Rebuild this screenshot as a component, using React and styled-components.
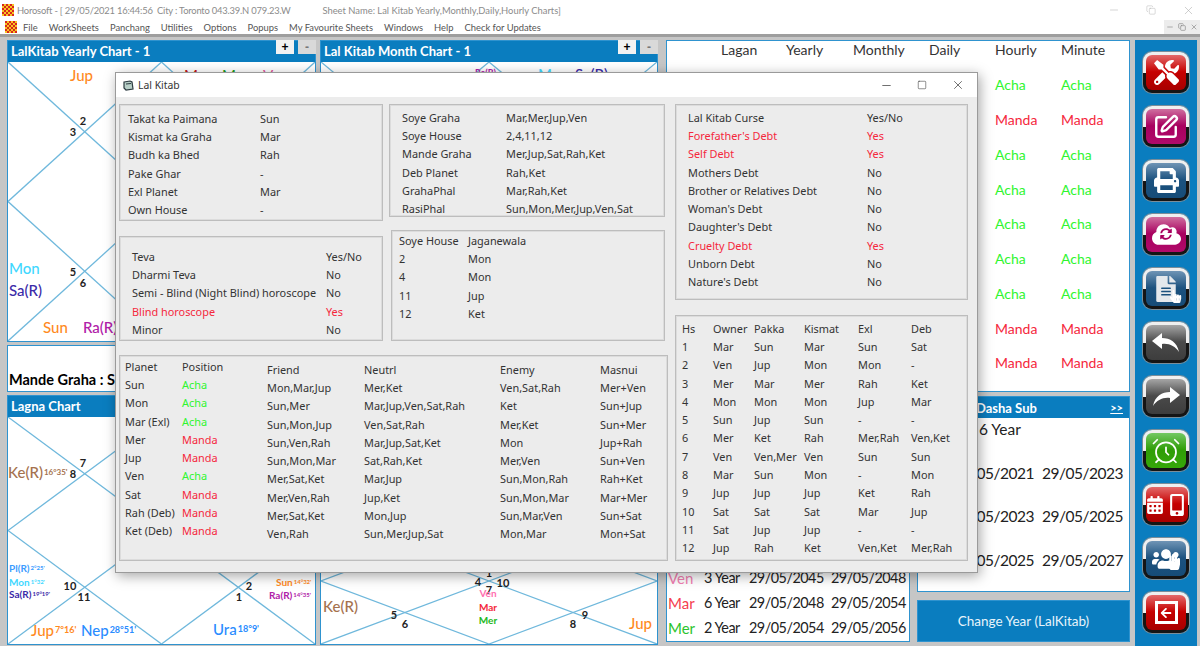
import React from 'react';
import styled, { createGlobalStyle } from 'styled-components';
import { SquarePen, AlarmClock, Minus, Square, X, Copy } from 'lucide-react';
import { FaTools, FaPrint, FaCloud, FaSyncAlt, FaFileAlt, FaHandPointer, FaCalendarAlt, FaUsers, FaHandPaper, FaArrowLeft, FaMobileAlt } from 'react-icons/fa';

const Global = createGlobalStyle`
  html, body { margin: 0; padding: 0; background: #c6c6c6; }
  * { box-sizing: border-box; }
`;

const CHART_FONT = `Lato, "Liberation Sans", sans-serif`;
const UI_FONT = `"Noto Sans", "Open Sans", sans-serif`;
const BLUE = '#0a7dbf';

const Page = styled.div`
  position: relative;
  width: 1200px;
  height: 646px;
  overflow: hidden;
  display: flex;
  flex-direction: column;
  background: #c6c6c6;
  font-family: ${CHART_FONT};
`;

const TitleBar = styled.div`
  height: 20px;
  flex: none;
  background: #fff;
  display: flex;
  align-items: center;
  padding-left: 2px;
  color: #8b8b8b;
  font-family: ${CHART_FONT};
  font-size: 9.4px;
  white-space: pre;
`;

const TitleText = styled.span`
  margin-left: 3px;
  letter-spacing: -0.2px;
`;

const SheetName = styled.span`
  margin-left: 32px;
`;

const WinControls = styled.div`
  margin-left: auto;
  width: 92px;
  display: flex;
  justify-content: space-between;
  align-items: center;
  padding-right: 5px;
  color: #a8a8a8;
`;

const MenuBar = styled.div`
  height: 14px;
  flex: none;
  background: #fff;
  display: flex;
  align-items: center;
  padding-left: 5px;
  color: #555;
  font-family: ${CHART_FONT};
  font-size: 9.4px;
`;

const MenuItem = styled.span`
  margin-left: ${p => p.$gap || 11}px;
`;

const MdiControls = styled.div`
  margin-left: auto;
  width: 36px;
  height: 14px;
  display: flex;
  align-items: center;
  justify-content: space-around;
  background: #ececec;
  color: #888;
`;

const Rule = styled.div`
  height: 3px;
  flex: none;
  background: #9e9e9e;
`;

const Workspace = styled.div`
  flex: 1;
  min-height: 0;
  display: flex;
  padding: 3px 3px 0 7px;
`;

const ChartsArea = styled.div`
  width: 651px;
  flex: none;
  display: grid;
  grid-template-columns: 309px 338px;
  grid-template-rows: 302px 47px 250px;
  column-gap: 4px;
  row-gap: 3px;
`;

const Panel = styled.section`
  position: relative;
  display: flex;
  flex-direction: column;
  background: #fff;
  border: 1px solid #2f93cf;
  min-height: 0;
  grid-column: ${p => p.$span || 'auto'};
`;

const PanelHead = styled.header`
  height: 21px;
  flex: none;
  display: flex;
  align-items: center;
  padding: 0 0 2px 3px;
  background: ${BLUE};
  color: #fff;
  font-size: 13px;
  font-weight: 700;
`;

const HeadButtons = styled.div`
  position: absolute;
  top: -1px;
  right: -1px;
  display: flex;
  gap: 4px;
`;

const HeadButton = styled.button`
  width: 18px;
  height: 14px;
  padding: 0;
  border: none;
  background: ${p => (p.$dim ? '#d9d9d9' : '#f2f2f2')};
  color: ${p => (p.$dim ? '#777' : '#000')};
  font: 700 12px/13px "Liberation Sans", sans-serif;
`;

const ChartBox = styled.div`
  position: relative;
  flex: ${p => (p.$height ? 'none' : '1')};
  height: ${p => (p.$height ? `${p.$height}px` : 'auto')};
  margin-top: ${p => (p.$height ? 'auto' : '0')};
  overflow: hidden;
`;

const ChartLines = styled.svg`
  position: absolute;
  inset: 0;
  width: 100%;
  height: 100%;
`;

const ChartLabel = styled.span`
  position: absolute;
  left: ${p => p.$x}px;
  top: ${p => p.$y}px;
  transform: translate(${p => (p.$mid ? '-50%' : '0')}, -50%);
  color: ${p => p.$color || '#222'};
  font-size: ${p => p.$size || 11}px;
  font-weight: ${p => p.$weight || 500};
  white-space: nowrap;
  line-height: 1;
`;

const Deg = styled.span`
  font-size: ${p => p.$size || 9}px;
  vertical-align: 35%;
  margin-left: 1px;
  font-weight: 700;
`;

const MandeText = styled.div`
  margin-top: auto;
  padding: 0 0 3px 1px;
  color: #000;
  font-size: 14.5px;
  font-weight: 700;
`;

const RightArea = styled.div`
  width: 464px;
  margin-left: 8px;
  flex: none;
  display: grid;
  grid-template-columns: 244px 213px;
  grid-template-rows: 352px 196px 46px;
  column-gap: 7px;
  row-gap: 4px;
`;

const TablePanel = styled(Panel)`
  grid-column: 1 / 3;
  width: 464px;
`;

const TableRow = styled.div`
  display: grid;
  grid-template-columns: 65px 67px 76px 66px 66px 1fr;
  padding-left: 54px;
  align-items: center;
  height: ${p => (p.$head ? '17px' : '34.75px')};
  margin-bottom: ${p => (p.$head ? '9.6px' : '0')};
  color: #333;
  font-size: 14px;
`;

const Status = styled.span`
  color: ${p => (p.$good ? '#2ff52f' : '#f5273c')};
  grid-column: ${p => p.$col || 'auto'};
`;

const DashaPanel = styled(Panel)`
  grid-row: 2 / 4;
  justify-content: flex-end;
  padding-bottom: 1px;
`;

const DashaRow = styled.div`
  display: grid;
  grid-template-columns: 36px 45px 82px 1fr;
  align-items: center;
  height: 25px;
  padding-left: 1px;
  color: #222;
  font-size: 14.4px;
  letter-spacing: -0.5px;
`;

const DashaName = styled.span`
  color: ${p => p.$color};
  font-size: 15px;
  letter-spacing: 0;
`;

const SubPanel = styled(Panel)`
  font-size: 15.5px;
  color: #222;
`;

const SubHead = styled(PanelHead)`
  justify-content: space-between;
  padding: 0 6px 0 58px;
`;

const MoreLink = styled.span`
  font-size: 11px;
  text-decoration: underline;
`;

const YearLine = styled.div`
  height: 22px;
  margin-bottom: 11px;
  padding-left: 61px;
  line-height: 22px;
`;

const SubDates = styled.div`
  height: 43.5px;
  display: flex;
  justify-content: flex-end;
  align-items: center;
  gap: 8px;
  padding-right: 6px;
  letter-spacing: -0.5px;
`;

const ChangeButton = styled.button`
  margin: 4px 0 0;
  background: ${BLUE};
  border: 1px solid #fff;
  outline: 1px solid #2f93cf;
  outline-offset: -1px;
  color: #e8f4fb;
  font-family: ${CHART_FONT};
  font-size: 13.5px;
  padding: 0;
`;

const Toolbar = styled.aside`
  width: 62px;
  margin-left: 5px;
  flex: none;
  display: flex;
  flex-direction: column;
  align-items: center;
  gap: 13px;
  padding-top: 12px;
  background: ${BLUE};
`;

const TONES = {
  red: ['#e36a6a', '#c60000', '#a80000'],
  magenta: ['#cf6f9f', '#a8005f', '#b00a6a'],
  navy: ['#6f94b5', '#1c527f', '#164c78'],
  grey: ['#a6a6a6', '#4a4a4a', '#3d3d3d'],
  green: ['#74c864', '#2f9d06', '#36a80a'],
};

const ToolButton = styled.button`
  width: 46px;
  height: 41px;
  flex: none;
  display: flex;
  padding: 3px;
  border: none;
  border-radius: 9px;
  background: linear-gradient(#efefef 0 52%, #151515 52% 100%);
  box-shadow: 0 0 0 1px #7a8d99;
`;

const ToolFace = styled.span`
  flex: 1;
  display: flex;
  align-items: center;
  justify-content: center;
  gap: 2px;
  position: relative;
  border-radius: 6px;
  color: #fff;
  background: linear-gradient(${p => TONES[p.$tone][0]} 0%, ${p => TONES[p.$tone][1]} 48%, ${p => TONES[p.$tone][2]} 100%);
`;

const OverIcon = styled.span`
  position: absolute;
  left: ${p => p.$x}px;
  top: ${p => p.$y}px;
  display: flex;
  color: ${p => p.$color || '#fff'};
`;

const Dialog = styled.div`
  position: absolute;
  left: 115px;
  top: 72px;
  width: 863px;
  height: 501px;
  display: flex;
  flex-direction: column;
  background: #ececec;
  border: 1px solid #9a9a9a;
  box-shadow: 2px 3px 12px rgba(0, 0, 0, 0.35);
  font-family: ${UI_FONT};
  font-size: 10.9px;
  color: #333;
`;

const DialogTitle = styled.div`
  height: 24px;
  flex: none;
  display: flex;
  align-items: center;
  gap: 4px;
  padding-left: 7px;
  background: #fff;
  color: #333;
  font-size: 10.4px;
`;

const DialogControls = styled.div`
  margin-left: auto;
  width: 85px;
  margin-right: 12px;
  display: flex;
  justify-content: space-between;
  align-items: center;
  color: #222;
`;

const DialogBody = styled.div`
  flex: 1;
  display: flex;
  gap: 7px;
  padding: 7px 0 0 3px;
`;

const LeftPart = styled.div`
  width: 549px;
  display: flex;
  flex-direction: column;
  gap: 14px;
`;

const TopColumns = styled.div`
  display: flex;
  gap: 6px;
  padding-right: 3px;
`;

const Column = styled.div`
  display: flex;
  flex-direction: column;
  width: ${p => p.$width}px;
  gap: ${p => p.$gap}px;
`;

const Group = styled.div`
  height: ${p => p.$height}px;
  margin-left: ${p => p.$left || 0}px;
  padding: ${p => p.$pad};
  border: 1px solid #bdbdbd;
  box-shadow: inset 0 0 0 1px #dcdcdc;
`;

const Row = styled.div`
  display: grid;
  grid-template-columns: ${p => p.$cols};
  height: 18.3px;
  align-items: center;
  white-space: nowrap;
  color: ${p => (p.$red ? '#f5273c' : 'inherit')};
`;

const PlanetSplit = styled.div`
  display: flex;
`;

const PlanetCol = styled.div`
  width: ${p => p.$width}px;
  padding-top: ${p => p.$top || 0}px;
  flex: none;
`;

function Logo() {
  const cells = [];
  for (let r = 0; r < 6; r++) {
    for (let c = 0; c < 6; c++) {
      cells.push(<rect key={`${r}${c}`} x={c * 2} y={r * 2} width="2" height="2" fill={(r + c) % 2 ? '#f7c520' : '#d9261c'} />);
    }
  }
  return <svg width="12" height="12" viewBox="0 0 12 12">{cells}</svg>;
}

function ChartGrid() {
  const lines = [
    [0, 0, 100, 100], [100, 0, 0, 100],
    [50, 0, 100, 50], [100, 50, 50, 100], [50, 100, 0, 50], [0, 50, 50, 0],
  ];
  return (
    <ChartLines viewBox="0 0 100 100" preserveAspectRatio="none">
      {lines.map(l => (
        <line key={l.join()} x1={l[0]} y1={l[1]} x2={l[2]} y2={l[3]} stroke="#6fb8dc" strokeWidth="1.3" vectorEffect="non-scaling-stroke" />
      ))}
    </ChartLines>
  );
}

// x, y are page coordinates, ox/oy the corner of the chart
function Chart({ ox, oy, height, labels }) {
  return (
    <ChartBox $height={height}>
      <ChartGrid />
      {labels.map(([text, x, y, color, size, deg, degSize, mid], i) => (
        <ChartLabel key={i} $x={x - ox} $y={y - oy} $color={color} $size={size} $mid={mid} $weight={size > 11 ? 500 : 700}>
          {text}{deg && <Deg $size={degSize}>{deg}</Deg>}
        </ChartLabel>
      ))}
    </ChartBox>
  );
}

const num = (text, x, y) => [text, x, y, '#222', 11, null, null, true];

const ORANGE = '#ff8a1e';
const CYAN = '#3fd8ff';
const INDIGO = '#3a2aa8';
const PURPLE = '#b020a8';
const BROWN = '#a5714e';
const SKY = '#2a8cff';

const yearlyLabels = [
  ['Jup', 70, 75, ORANGE, 15],
  ['Mar', 184, 75, '#c01818', 15],
  ['Mer', 222, 75, '#1a9a1a', 15],
  ['Ven', 263, 75, '#e0559a', 15],
  num('2', 83, 120), num('3', 73, 131), num('5', 73, 271), num('6', 83, 282),
  ['Mon', 9, 268, CYAN, 15],
  ['Sa(R)', 9, 290, INDIGO, 15],
  ['Sun', 43, 327, ORANGE, 15],
  ['Ra(R)', 83, 327, PURPLE, 15],
];

const monthLabels = [
  ['Ra(R)', 475, 72, PURPLE, 9],
  ['Mon', 538, 74, CYAN, 15],
  ['Sa(R)', 575, 74, INDIGO, 15],
];

const lagnaLabels = [
  ['Ke(R)', 8, 473, BROWN, 15, "16°35'", 8],
  num('7', 83, 463), num('8', 73, 474), num('10', 70, 586), num('11', 84, 597), num('2', 249, 586), num('1', 239, 597),
  ['Pl(R)', 9, 569, '#3b9cff', 10, "2°25'", 6],
  ['Mon', 9, 583, CYAN, 10, "1°32'", 6],
  ['Sa(R)', 9, 595, INDIGO, 10, "19°19'", 6],
  ['Jup', 31, 631, ORANGE, 15, "7°16'", 9],
  ['Nep', 81, 631, SKY, 15, "28°51'", 9],
  ['Ura', 213, 630, SKY, 15, "18°9'", 9],
  ['Sun', 276, 583, ORANGE, 10, "14°32'", 6],
  ['Ra(R)', 269, 596, PURPLE, 10, "14°35'", 6],
];

const lowerLabels = [
  num('1', 489, 573), num('4', 478, 582), num('10', 503, 583), num('7', 489, 590),
  ['Ven', 488, 594, '#ff6fb0', 10, null, null, true],
  ['Mar', 488, 608, '#f5273c', 10, null, null, true],
  ['Mer', 488, 621, '#22b822', 10, null, null, true],
  num('5', 394, 615), num('6', 405, 624), num('8', 573, 624), num('9', 585, 615),
  ['Ke(R)', 323, 607, BROWN, 15],
  ['Jup', 629, 624, ORANGE, 15],
];

const statusRows = [true, false, true, true, true, true, true, false, false];

const curse = [
  ['Forefather\'s Debt', 'Yes', true], ['Self Debt', 'Yes', true], ['Mothers Debt', 'No'],
  ['Brother or Relatives Debt', 'No'], ['Woman\'s Debt', 'No'], ['Daughter\'s Debt', 'No'],
  ['Cruelty Debt', 'Yes', true], ['Unborn Debt', 'No'], ['Nature\'s Debt', 'No'],
];

const houses = [
  ['1', 'Mar', 'Sun', 'Mar', 'Sun', 'Sat'],
  ['2', 'Ven', 'Jup', 'Mon', 'Mon', '-'],
  ['3', 'Mer', 'Mar', 'Mer', 'Rah', 'Ket'],
  ['4', 'Mon', 'Mon', 'Mon', 'Jup', 'Mar'],
  ['5', 'Sun', 'Jup', 'Sun', '-', '-'],
  ['6', 'Mer', 'Ket', 'Rah', 'Mer,Rah', 'Ven,Ket'],
  ['7', 'Ven', 'Ven,Mer', 'Ven', 'Sun', 'Sun'],
  ['8', 'Mar', 'Sun', 'Mon', '-', 'Mon'],
  ['9', 'Jup', 'Jup', 'Jup', 'Ket', 'Rah'],
  ['10', 'Sat', 'Sat', 'Sat', 'Mar', 'Jup'],
  ['11', 'Sat', 'Jup', 'Jup', '-', '-'],
  ['12', 'Jup', 'Rah', 'Ket', 'Ven,Ket', 'Mer,Rah'],
];

const planets = [
  ['Sun', 'Acha'], ['Mon', 'Acha'], ['Mar (Exl)', 'Acha'], ['Mer', 'Manda'], ['Jup', 'Manda'],
  ['Ven', 'Acha'], ['Sat', 'Manda'], ['Rah (Deb)', 'Manda'], ['Ket (Deb)', 'Manda'],
];

const relations = [
  ['Mon,Mar,Jup', 'Mer,Ket', 'Ven,Sat,Rah', 'Mer+Ven'],
  ['Sun,Mer', 'Mar,Jup,Ven,Sat,Rah', 'Ket', 'Sun+Jup'],
  ['Sun,Mon,Jup', 'Ven,Sat,Rah', 'Mer,Ket', 'Sun+Mer'],
  ['Sun,Ven,Rah', 'Mar,Jup,Sat,Ket', 'Mon', 'Jup+Rah'],
  ['Sun,Mon,Mar', 'Sat,Rah,Ket', 'Mer,Ven', 'Sun+Ven'],
  ['Mer,Sat,Ket', 'Mar,Jup', 'Sun,Mon,Rah', 'Rah+Ket'],
  ['Mer,Ven,Rah', 'Jup,Ket', 'Sun,Mon,Mar', 'Mar+Mer'],
  ['Mer,Sat,Ket', 'Mon,Jup', 'Sun,Mar,Ven', 'Sun+Sat'],
  ['Ven,Rah', 'Sun,Mer,Jup,Sat', 'Mon,Mar', 'Mon+Sat'],
];

function Swoosh({ flip }) {
  return (
    <svg width="30" height="22" viewBox="0 0 30 22" fill="#fff" style={flip ? { transform: 'scaleX(-1)' } : undefined}>
      <path d="M2 20 C4 10 11 6 19 6 L19 1 L29 9 L19 17 L19 12 C12 11 6 14 2 20 Z" />
    </svg>
  );
}

function DialogIcon() {
  return (
    <svg width="11" height="11" viewBox="0 0 11 11" fill="none">
      <path d="M1 2 L7 1 L9 2 L10 9 L3 10 L1 8 Z" fill="#b8d0c8" stroke="#2c3a40" strokeWidth="1.2" />
      <path d="M3 4 L8 3.5" stroke="#2c3a40" />
    </svg>
  );
}

function Tools() {
  return (
    <Toolbar>
      <ToolButton><ToolFace $tone="red"><FaTools size={25} /></ToolFace></ToolButton>
      <ToolButton><ToolFace $tone="magenta"><SquarePen size={26} strokeWidth={2.2} /></ToolFace></ToolButton>
      <ToolButton><ToolFace $tone="navy"><FaPrint size={25} /></ToolFace></ToolButton>
      <ToolButton>
        <ToolFace $tone="magenta">
          <FaCloud size={29} />
          <OverIcon $x={14} $y={11} $color="#a8005f"><FaSyncAlt size={12} /></OverIcon>
        </ToolFace>
      </ToolButton>
      <ToolButton>
        <ToolFace $tone="navy">
          <FaFileAlt size={26} color="#e4e8ec" />
          <OverIcon $x={23} $y={19}><FaHandPointer size={13} /></OverIcon>
        </ToolFace>
      </ToolButton>
      <ToolButton><ToolFace $tone="grey"><Swoosh flip /></ToolFace></ToolButton>
      <ToolButton><ToolFace $tone="grey"><Swoosh /></ToolFace></ToolButton>
      <ToolButton><ToolFace $tone="green"><AlarmClock size={30} strokeWidth={1.4} /></ToolFace></ToolButton>
      <ToolButton>
        <ToolFace $tone="red">
          <FaCalendarAlt size={18} />
          <FaMobileAlt size={22} />
        </ToolFace>
      </ToolButton>
      <ToolButton>
        <ToolFace $tone="navy">
          <FaUsers size={28} />
          <OverIcon $x={19} $y={13}><FaHandPaper size={16} /></OverIcon>
        </ToolFace>
      </ToolButton>
      <ToolButton>
        <ToolFace $tone="red">
          <OverIcon $x={9} $y={6}><svg width="23" height="23" viewBox="0 0 23 23"><rect x="1.5" y="1.5" width="20" height="20" fill="none" stroke="#fff" strokeWidth="3" /></svg></OverIcon>
          <FaArrowLeft size={12} />
        </ToolFace>
      </ToolButton>
    </Toolbar>
  );
}

function LalKitabDialog() {
  return (
    <Dialog>
      <DialogTitle>
        <DialogIcon />
        Lal Kitab
        <DialogControls>
          <Minus size={13} strokeWidth={1.2} />
          <Square size={10} strokeWidth={1.2} />
          <X size={14} strokeWidth={1.1} />
        </DialogControls>
      </DialogTitle>
      <DialogBody>
        <LeftPart>
          <TopColumns>
            <Column $width={264} $gap={15}>
              <Group $height={117} $pad="4px 0 0 8px">
                {[['Takat ka Paimana', 'Sun'], ['Kismat ka Graha', 'Mar'], ['Budh ka Bhed', 'Rah'], ['Pake Ghar', '-'], ['Exl Planet', 'Mar'], ['Own House', '-']].map(r => (
                  <Row key={r[0]} $cols="132px 1fr"><span>{r[0]}</span><span>{r[1]}</span></Row>
                ))}
              </Group>
              <Group $height={105} $pad="10px 0 0 12px">
                {[['Teva', 'Yes/No'], ['Dharmi Teva', 'No'], ['Semi - Blind (Night Blind) horoscope', 'No'], ['Blind horoscope', 'Yes', true], ['Minor', 'No']].map(r => (
                  <Row key={r[0]} $cols="194px 1fr" $red={r[2]}><span>{r[0]}</span><span>{r[1]}</span></Row>
                ))}
              </Group>
            </Column>
            <Column $width={276} $gap={13}>
              <Group $height={113} $pad="3px 0 0 12px">
                {[['Soye Graha', 'Mar,Mer,Jup,Ven'], ['Soye House', '2,4,11,12'], ['Mande Graha', 'Mer,Jup,Sat,Rah,Ket'], ['Deb Planet', 'Rah,Ket'], ['GrahaPhal', 'Mar,Rah,Ket'], ['RasiPhal', 'Sun,Mon,Mer,Jup,Ven,Sat']].map(r => (
                  <Row key={r[0]} $cols="104px 1fr"><span>{r[0]}</span><span>{r[1]}</span></Row>
                ))}
              </Group>
              <Group $height={111} $left={2} $pad="0 0 0 7px">
                {[['Soye House', 'Jaganewala'], ['2', 'Mon'], ['4', 'Mon'], ['11', 'Jup'], ['12', 'Ket']].map(r => (
                  <Row key={r[0]} $cols="69px 1fr"><span>{r[0]}</span><span>{r[1]}</span></Row>
                ))}
              </Group>
            </Column>
          </TopColumns>
          <Group $height={206} $pad="0 0 0 5px">
            <PlanetSplit>
              <PlanetCol $width={142} $top={1}>
                <Row $cols="57px 1fr"><span>Planet</span><span>Position</span></Row>
                {planets.map(p => (
                  <Row key={p[0]} $cols="57px 1fr"><span>{p[0]}</span><Status $good={p[1] === 'Acha'}>{p[1]}</Status></Row>
                ))}
              </PlanetCol>
              <PlanetCol $width={400} $top={4}>
                <Row $cols="97px 136px 100px 1fr"><span>Friend</span><span>Neutrl</span><span>Enemy</span><span>Masnui</span></Row>
                {relations.map(r => (
                  <Row key={r[0] + r[3]} $cols="97px 136px 100px 1fr">{r.map((c, i) => <span key={i}>{c}</span>)}</Row>
                ))}
              </PlanetCol>
            </PlanetSplit>
          </Group>
        </LeftPart>
        <Column $width={293} $gap={15}>
          <Group $height={196} $pad="3px 0 0 12px">
            <Row $cols="179px 1fr"><span>Lal Kitab Curse</span><span>Yes/No</span></Row>
            {curse.map(r => (
              <Row key={r[0]} $cols="179px 1fr" $red={r[2]}><span>{r[0]}</span><span>{r[1]}</span></Row>
            ))}
          </Group>
          <Group $height={246} $pad="3px 0 0 6px">
            <Row $cols="31px 41px 50px 54px 53px 1fr"><span>Hs</span><span>Owner</span><span>Pakka</span><span>Kismat</span><span>Exl</span><span>Deb</span></Row>
            {houses.map(h => (
              <Row key={h[0]} $cols="31px 41px 50px 54px 53px 1fr">{h.map((c, i) => <span key={i}>{c}</span>)}</Row>
            ))}
          </Group>
        </Column>
      </DialogBody>
    </Dialog>
  );
}

export default function App() {
  return (
    <Page>
      <Global />
      <TitleBar>
        <Logo />
        <TitleText>Horosoft - [ 29/05/2021 16:44:56  City : Toronto 043.39.N 079.23.W</TitleText>
        <SheetName>Sheet Name: Lal Kitab Yearly,Monthly,Daily,Hourly Charts]</SheetName>
        <WinControls>
          <Minus size={12} strokeWidth={1} />
          <Copy size={10} strokeWidth={1} />
          <X size={13} strokeWidth={1} />
        </WinControls>
      </TitleBar>
      <MenuBar>
        <Logo />
        <MenuItem $gap={6}>File</MenuItem>
        {['WorkSheets', 'Panchang', 'Utilities', 'Options', 'Popups', 'My Favourite Sheets', 'Windows', 'Help', 'Check for Updates'].map(m => (
          <MenuItem key={m}>{m}</MenuItem>
        ))}
        <MdiControls>
          <Minus size={8} />
          <Copy size={8} />
          <X size={8} />
        </MdiControls>
      </MenuBar>
      <Rule />
      <Workspace>
        <ChartsArea>
          <Panel>
            <PanelHead>LalKitab Yearly Chart - 1</PanelHead>
            <HeadButtons><HeadButton>+</HeadButton><HeadButton $dim>-</HeadButton></HeadButtons>
            <Chart ox={8} oy={62} labels={yearlyLabels} />
          </Panel>
          <Panel>
            <PanelHead>Lal Kitab Month Chart - 1</PanelHead>
            <HeadButtons><HeadButton>+</HeadButton><HeadButton $dim>-</HeadButton></HeadButtons>
            <Chart ox={321} oy={62} labels={monthLabels} />
          </Panel>
          <Panel $span="1 / 3"><MandeText>Mande Graha : Sun</MandeText></Panel>
          <Panel>
            <PanelHead>Lagna Chart</PanelHead>
            <Chart ox={8} oy={418} labels={lagnaLabels} />
          </Panel>
          <Panel>
            <Chart ox={321} oy={519} height={126} labels={lowerLabels} />
          </Panel>
        </ChartsArea>
        <RightArea>
          <TablePanel>
            <TableRow $head>
              {['Lagan', 'Yearly', 'Monthly', 'Daily', 'Hourly', 'Minute'].map(h => <span key={h}>{h}</span>)}
            </TableRow>
            {statusRows.map((good, i) => (
              <TableRow key={i}>
                <Status $col={5} $good={good}>{good ? 'Acha' : 'Manda'}</Status>
                <Status $col={6} $good={good}>{good ? 'Acha' : 'Manda'}</Status>
              </TableRow>
            ))}
          </TablePanel>
          <DashaPanel>
            {[['Ven', '#f27fb2', '3 Year', '29/05/2045', '29/05/2048'], ['Mar', '#f5404f', '6 Year', '29/05/2048', '29/05/2054'], ['Mer', '#2cc42c', '2 Year', '29/05/2054', '29/05/2056']].map(r => (
              <DashaRow key={r[0]}>
                <DashaName $color={r[1]}>{r[0]}</DashaName>
                <span>{r[2]}</span><span>{r[3]}</span><span>{r[4]}</span>
              </DashaRow>
            ))}
          </DashaPanel>
          <SubPanel>
            <SubHead>Dasha Sub<MoreLink>&gt;&gt;</MoreLink></SubHead>
            <YearLine>6 Year</YearLine>
            <SubDates><span>29/05/2021</span><span>29/05/2023</span></SubDates>
            <SubDates><span>29/05/2023</span><span>29/05/2025</span></SubDates>
            <SubDates><span>29/05/2025</span><span>29/05/2027</span></SubDates>
          </SubPanel>
          <ChangeButton>Change Year (LalKitab)</ChangeButton>
        </RightArea>
        <Tools />
      </Workspace>
      <LalKitabDialog />
    </Page>
  );
}
